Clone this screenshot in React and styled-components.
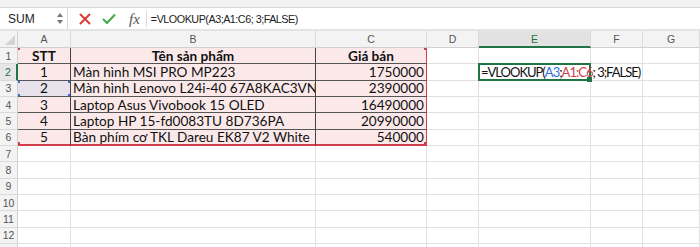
import React from 'react';
import styled, { createGlobalStyle } from 'styled-components';

const GlobalStyle = createGlobalStyle`
  html, body { margin: 0; padding: 0; background: #fff; }
  body { width: 700px; height: 247px; overflow: hidden; font-family: 'Lato', 'Liberation Sans', sans-serif; }
`;

const GREEN = '#217346';
const RED = '#d13f4a';
const BLUE = '#2f6fd6';
const PINK = '#fbe9ea';

const Page = styled.div`
  display: flex;
  flex-direction: column;
  width: 700px;
  height: 247px;
  overflow: hidden;
`;

const TopStrip = styled.div`
  flex-shrink: 0;
  height: 7px;
  background: #f3f3f3;
  border-bottom: 1px solid #d6d6d6;
`;

const FormulaBar = styled.div`
  flex-shrink: 0;
  display: flex;
  align-items: center;
  height: 21px;
  background: #fff;
  border-bottom: 2px solid #e4e4e4;
`;

const NameBox = styled.div`
  display: flex;
  align-items: center;
  justify-content: space-between;
  width: 68px;
  height: 100%;
  padding: 0 4px 0 8px;
  box-sizing: border-box;
  border-right: 1px solid #d8d8d8;
  font-family: 'Liberation Sans', sans-serif;
  font-size: 12px;
  color: #222;
`;

const Spinner = styled.div`
  display: flex;
  flex-direction: column;
  gap: 3px;
`;

const Arrow = styled.span`
  width: 0;
  height: 0;
  border-left: 3px solid transparent;
  border-right: 3px solid transparent;
  ${({ $up }) => ($up ? 'border-bottom: 4px solid #777;' : 'border-top: 4px solid #777;')}
`;

const Actions = styled.div`
  display: flex;
  align-items: center;
  gap: 11px;
  padding-left: 11px;
  height: 100%;
`;

const Fx = styled.span`
  font-family: 'Liberation Serif', serif;
  font-style: italic;
  font-size: 15px;
  color: #555;
  margin-left: 2px;
  padding-right: 6px;
  border-right: 1px solid #dcdcdc;
  line-height: 16px;
`;

const FormulaInput = styled.div`
  padding-left: 4px;
  font-family: 'Liberation Sans', sans-serif;
  font-size: 10.8px;
  letter-spacing: -0.5px;
  color: #222;
  white-space: nowrap;
`;

const Sheet = styled.div`
  flex: 1;
  min-height: 0;
  overflow: hidden;
  display: grid;
  grid-template-columns: 18px 53px 245px 111px 52px 112px 52px 1fr;
  grid-template-rows: 17px;
  grid-auto-rows: 16.33px;
`;

const ColHead = styled.div`
  display: flex;
  align-items: center;
  justify-content: center;
  background: ${({ $active }) => ($active ? '#e2e2e2' : '#f3f3f3')};
  border-right: 1px solid #dadada;
  border-bottom: ${({ $active }) => ($active ? `2px solid ${GREEN}` : '1px solid #d0d0d0')};
  box-sizing: border-box;
  font-size: 10.5px;
  color: ${({ $active }) => ($active ? GREEN : '#555')};
  font-family: 'Liberation Sans', sans-serif;
`;

const Corner = styled.div`
  position: relative;
  background: #f3f3f3;
  border-right: 1px solid #d0d0d0;
  border-bottom: 1px solid #d0d0d0;
  box-sizing: border-box;

  &:after {
    content: '';
    position: absolute;
    right: 2px;
    bottom: 2px;
    border-left: 10px solid transparent;
    border-bottom: 10px solid #d4d4d4;
  }
`;

const RowHead = styled.div`
  display: flex;
  align-items: center;
  justify-content: center;
  background: ${({ $active }) => ($active ? '#e6e6e6' : '#f3f3f3')};
  border-right: ${({ $active }) => ($active ? `2px solid ${GREEN}` : '1px solid #d0d0d0')};
  border-bottom: 1px solid #dadada;
  box-sizing: border-box;
  font-size: 10.5px;
  color: ${({ $active }) => ($active ? GREEN : '#555')};
  font-family: 'Liberation Sans', sans-serif;
`;

const Cell = styled.div`
  position: relative;
  display: flex;
  align-items: center;
  justify-content: ${({ $align }) => $align || 'flex-start'};
  padding: 0 2px;
  box-sizing: border-box;
  background: ${({ $fill }) => $fill || '#fff'};
  border-right: 1px solid ${({ $right }) => $right || '#e1e1e1'};
  border-bottom: ${({ $bottom }) => $bottom || '1px solid #e1e1e1'};
  font-size: 13.6px;
  font-weight: ${({ $bold }) => ($bold ? 700 : 400)};
  color: #111;
  white-space: nowrap;
  overflow: ${({ $spill }) => ($spill ? 'visible' : 'hidden')};
  z-index: ${({ $spill }) => ($spill ? 2 : 'auto')};
`;

const Frame = styled.div`
  position: absolute;
  left: -1px;
  top: -1px;
  right: -1px;
  bottom: -1px;
  border: ${({ $w }) => $w}px solid ${({ $c }) => $c};
  pointer-events: none;
`;

const Handle = styled.span`
  position: absolute;
  width: 5px;
  height: 5px;
  background: ${({ $c }) => $c};
  ${({ $v }) => $v}: -3px;
  ${({ $h }) => $h}: -3px;
`;

const Ref = styled.span`
  color: ${({ $c }) => $c};
`;

const EditText = styled.span`
  position: relative;
  font-size: 13px;
  letter-spacing: -1px;
  color: #111;
`;

const cols = ['A', 'B', 'C', 'D', 'E', 'F', 'G'];

const table = [
  ['STT', 'Tên sản phẩm', 'Giá bán'],
  ['1', 'Màn hình MSI PRO MP223', '1750000'],
  ['2', 'Màn hình Lenovo L24i-40 67A8KAC3VN', '2390000'],
  ['3', 'Laptop Asus Vivobook 15 OLED', '16490000'],
  ['4', 'Laptop HP 15-fd0083TU 8D736PA', '20990000'],
  ['5', 'Bàn phím cơ TKL Dareu EK87 V2 White', '540000'],
];

const CloseIcon = () => (
  <svg width="12" height="12" viewBox="0 0 12 12">
    <path d="M1.5 1.5 L10.5 10.5 M10.5 1.5 L1.5 10.5" stroke="#dc3a34" strokeWidth="2" strokeLinecap="round" />
  </svg>
);

const CheckIcon = () => (
  <svg width="14" height="12" viewBox="0 0 14 12">
    <path d="M1.5 6.5 L5 10 L12.5 2" fill="none" stroke="#3eaa4a" strokeWidth="2" strokeLinecap="round" strokeLinejoin="round" />
  </svg>
);

const App = () => {
  const rows = Array.from({ length: 13 }, (_, i) => i + 1);

  const renderCell = (r, c) => {
    const inTable = r <= 6 && c <= 2;
    const key = `${r}-${c}`;

    if (inTable) {
      const text = table[r - 1][c];
      const align = r === 1 || c === 0 ? 'center' : c === 2 ? 'flex-end' : 'flex-start';
      const isSel = r === 3 && c === 0;
      const right = c === 2 ? RED : '#444';
      const bottom = r === 6 ? `2px solid ${RED}` : '1px solid #555';
      return (
        <Cell key={key} $align={align} $bold={r === 1} $fill={isSel ? '#e6e1ea' : PINK} $right={right} $bottom={bottom}>
          {text}
          {isSel && (
            <Frame $w={1.5} $c={BLUE}>
              <Handle $c={BLUE} $v="top" $h="left" />
              <Handle $c={BLUE} $v="top" $h="right" />
              <Handle $c={BLUE} $v="bottom" $h="left" />
              <Handle $c={BLUE} $v="bottom" $h="right" />
            </Frame>
          )}
          {r === 1 && c === 0 && <Handle $c={RED} $v="top" $h="left" />}
          {r === 1 && c === 2 && <Handle $c={RED} $v="top" $h="right" />}
          {r === 6 && c === 0 && <Handle $c={RED} $v="bottom" $h="left" />}
          {r === 6 && c === 2 && <Handle $c={RED} $v="bottom" $h="right" />}
        </Cell>
      );
    }

    if (r === 2 && c === 4) {
      return (
        <Cell key={key} $spill>
          <Frame $w={2} $c={GREEN}>
            <Handle $c={GREEN} $v="bottom" $h="right" />
          </Frame>
          <EditText>
            =VLOOKUP(<Ref $c={BLUE}>A3</Ref>;<Ref $c={RED}>A1:C6</Ref>; 3;FALSE)
          </EditText>
        </Cell>
      );
    }

    return <Cell key={key} />;
  };

  return (
    <Page>
      <GlobalStyle />
      <TopStrip />
      <FormulaBar>
        <NameBox>
          SUM
          <Spinner>
            <Arrow $up />
            <Arrow />
          </Spinner>
        </NameBox>
        <Actions>
          <CloseIcon />
          <CheckIcon />
          <Fx>fx</Fx>
        </Actions>
        <FormulaInput>=VLOOKUP(A3;A1:C6; 3;FALSE)</FormulaInput>
      </FormulaBar>
      <Sheet>
        <Corner />
        {cols.map((c) => (
          <ColHead key={c} $active={c === 'E'}>
            {c}
          </ColHead>
        ))}
        {rows.map((r) => (
          <React.Fragment key={r}>
            <RowHead $active={r === 2}>{r}</RowHead>
            {cols.map((_, c) => renderCell(r, c))}
          </React.Fragment>
        ))}
      </Sheet>
    </Page>
  );
};

export default App;
